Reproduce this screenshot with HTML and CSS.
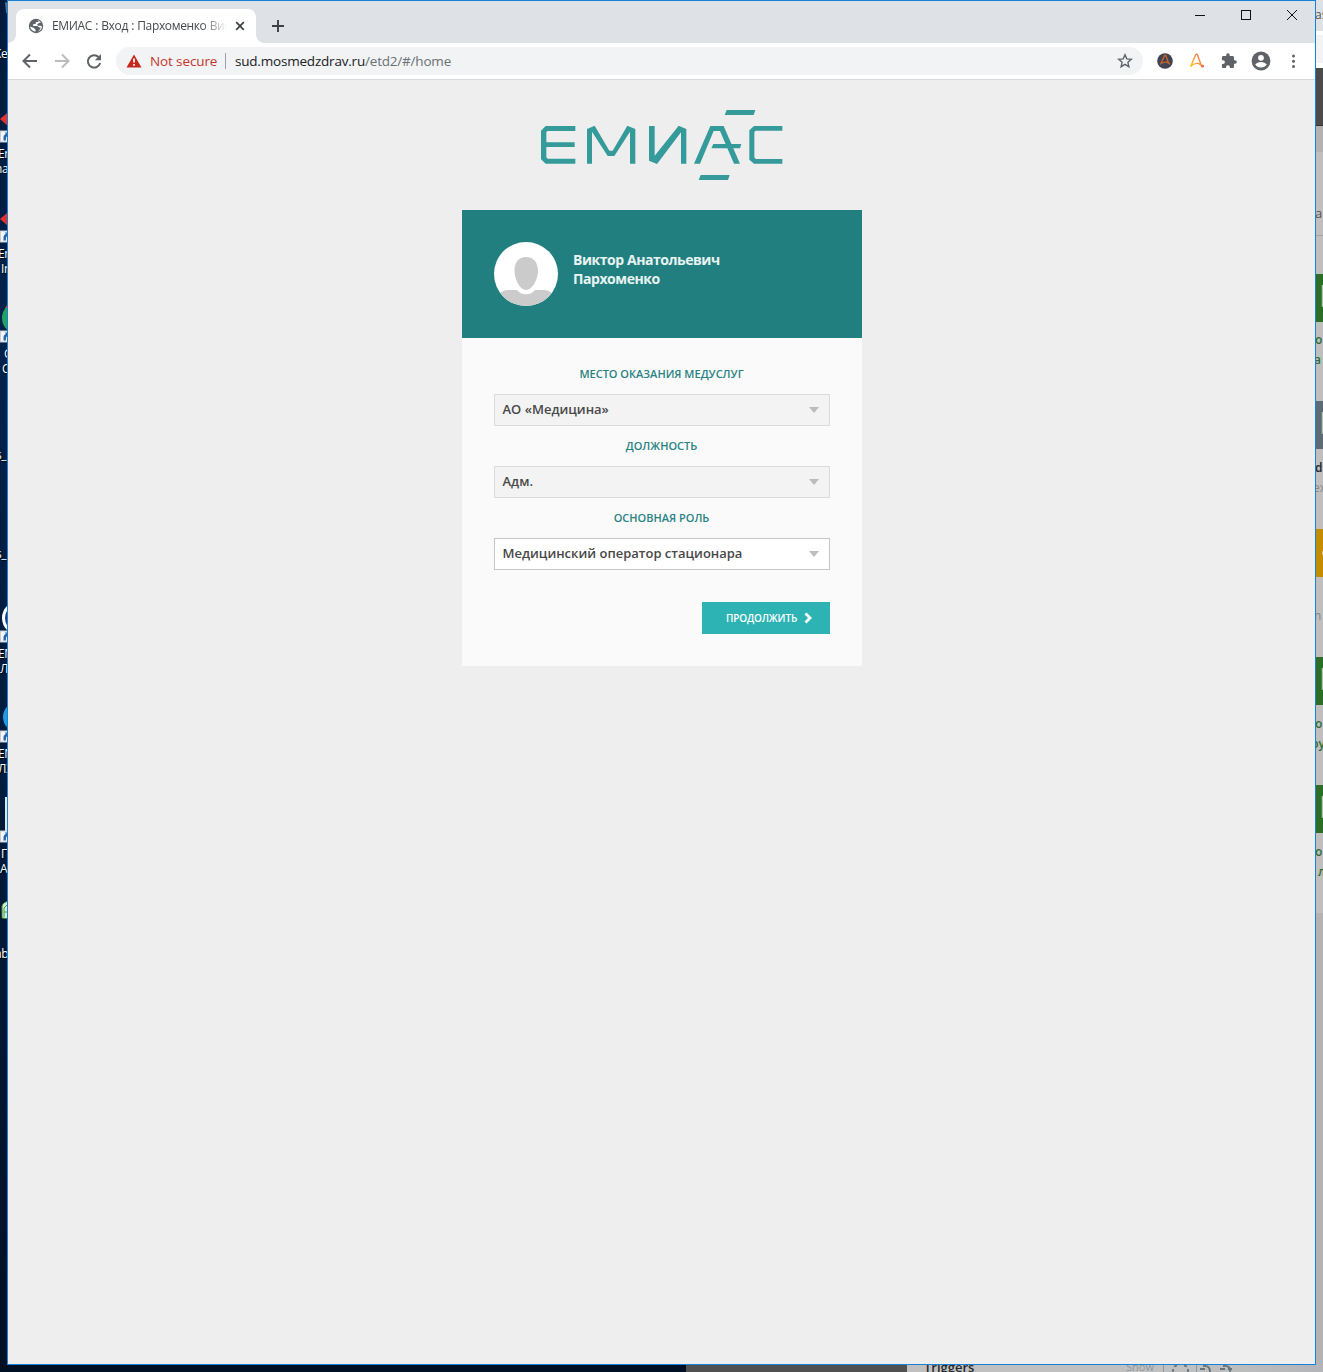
FILE: index.html
```html
<!DOCTYPE html>
<html lang="ru">
<head>
<meta charset="utf-8">
<title>ЕМИАС : Вход</title>
<link rel="stylesheet" href="styles.css">
</head>
<body>
<svg class="defs" width="0" height="0">
  <symbol id="shortcut" viewBox="0 0 12 12"><rect width="12" height="12" fill="#c8ccd2"/><rect x="1" y="1" width="10" height="10" fill="#f4f6f8"/><path d="M3.500 10V7q0-3 2.500-3.500L4.800 2H9v4.500L7.500 5.500Q5.500 6 6 10z" fill="#2d62a8"/></symbol>
  <symbol id="tile" viewBox="0 0 12 22"><path d="M10 .8H1.500V21H10" fill="none" stroke="#b5c4b2" stroke-width="1.500"/></symbol>
</svg>
<div class="desktop">
  <div class="shortcuts">
    <svg class="item" style="top:0;left:0" width="8" height="20"><path d="M5 2l1 10 2 4V3z" fill="#667386"/></svg>
    <span class="item label" style="top:47px;left:-6px">Ke</span>
    <svg class="item" style="top:112px;left:0" width="8" height="14"><path d="M0 7L8 0v14z" fill="#e4312b"/></svg>
    <svg class="item" style="top:130px;left:0" width="12" height="13"><use href="#shortcut"/></svg>
    <span class="item label" style="top:147px;left:-2px">En</span>
    <span class="item label" style="top:162px;left:-5px">na</span>
    <svg class="item" style="top:212px;left:0" width="8" height="14"><path d="M0 7L8 0v14z" fill="#e4312b"/></svg>
    <svg class="item" style="top:230px;left:0" width="12" height="13"><use href="#shortcut"/></svg>
    <span class="item label" style="top:247px;left:-2px">En</span>
    <span class="item label" style="top:262px;left:1px">In</span>
    <svg class="item" style="top:300px;left:0" width="8" height="32"><circle cx="18" cy="18" r="16" fill="#20a35a"/><path d="M5 8l3-4v4z" fill="#d8422f"/></svg>
    <svg class="item" style="top:330px;left:0" width="12" height="13"><use href="#shortcut"/></svg>
    <span class="item label" style="top:347px;left:4px">G</span>
    <span class="item label" style="top:362px;left:2px">C</span>
    <span class="item label" style="top:448px;left:-4px">s_</span>
    <span class="item label" style="top:547px;left:-4px">s_</span>
    <svg class="item" style="top:600px;left:0" width="8" height="36"><circle cx="19" cy="18" r="15.500" fill="#263c78" stroke="#fff" stroke-width="3"/></svg>
    <svg class="item" style="top:630px;left:0" width="12" height="13"><use href="#shortcut"/></svg>
    <span class="item label" style="top:647px;left:-2px">ЕМ</span>
    <span class="item label" style="top:662px;left:0">Л</span>
    <svg class="item" style="top:700px;left:0" width="8" height="34"><circle cx="18" cy="17" r="15" fill="#219ae0"/></svg>
    <svg class="item" style="top:730px;left:0" width="12" height="13"><use href="#shortcut"/></svg>
    <span class="item label" style="top:747px;left:-2px">ЕМ</span>
    <span class="item label" style="top:762px;left:-2px">ЛЭ</span>
    <svg class="item" style="top:797px;left:5px" width="2" height="34"><path d="M0 0h2v34H0z" fill="#e5e5e5"/></svg>
    <svg class="item" style="top:830px;left:0" width="12" height="13"><use href="#shortcut"/></svg>
    <span class="item label" style="top:847px;left:1px">П</span>
    <span class="item label" style="top:862px;left:0">А</span>
    <svg class="item" style="top:900px;left:1px" width="10" height="20"><path d="M1 18V6q1-4 7-5v18z" fill="#d9edd4" stroke="#358324"/><path d="M3 17V8l3-3M3 12h4" fill="none" stroke="#4d9a3d"/></svg>
    <span class="item label" style="top:947px;left:-5px">ab</span>
  </div>

  <div class="monitor">
    <span class="item text" style="top:6px">as</span>
    <div class="item band omni"></div>
    <div class="item band dark"></div>
    <div class="item band sub"></div>
    <span class="item text" style="top:205px;font-size:13px">al</span>
    <div class="item band rule"></div>
    <div class="item band green" style="top:274px"><svg width="12" height="22"><use href="#tile"/></svg></div>
    <span class="item text ok" style="top:331px">о</span>
    <span class="item text ok" style="top:351px;left:-2px">а</span>
    <div class="item band slate" style="top:401px"><svg width="12" height="22"><use href="#tile"/></svg></div>
    <span class="item text strong" style="top:459px">d</span>
    <span class="item text faint" style="top:479px;left:-3px">ex</span>
    <div class="item band amber" style="top:529px"><svg width="12" height="22"><circle cx="4" cy="13" r="3" fill="#ded2b3"/></svg></div>
    <span class="item text faint" style="top:607px;left:-2px">n</span>
    <div class="item band green" style="top:657px"><svg width="12" height="22"><use href="#tile"/></svg></div>
    <span class="item text ok" style="top:715px">о</span>
    <span class="item text ok" style="top:735px;left:-5px">ру</span>
    <div class="item band green" style="top:785px"><svg width="12" height="22"><use href="#tile"/></svg></div>
    <span class="item text ok" style="top:843px">о</span>
    <span class="item text ok" style="top:863px;left:2px">л</span>
    <div class="item band lower"></div>
  </div>

  <div class="bottom-strip">
    <div class="strip-dark"></div>
    <div class="strip-panel">
      <span class="triggers">Triggers</span><span class="show">Show</span>
      <svg class="marks" width="82" height="7" fill="none" stroke="#67747c" stroke-width="1.800"><path d="M.5 0v7M33.500 0v7" stroke="#8d9ba5" stroke-width="1"/><path d="M10 7V4M11 1.500l3-1M21 .5l3 1M25 4v3M37 4h5M40 1q7-1 7 6M57 4h5M60 1q8-1 7 6M69 4h-4"/></svg>
    </div>
  </div>

  <main class="window">
    <header class="tabstrip">
      <div class="tab">
        <svg width="16" height="16" viewBox="0 0 16 16"><circle cx="8" cy="8" r="7.200" fill="#5f6368"/><path d="M2 8.500l4 1.500 1.500 1.500v2.200Q3 13 2 8.500zM7 1.800l4 .2-.8 2H8L7.500 6H5.300L5 8h4.500l1.800 1.500h1.500L11.500 12 9.800 13.500q4-1.500 4.200-5L12 7.500 10.500 8 9 6.500l2-1.500 2-.6Q10.500 1.300 7 1.800z" fill="#fff"/></svg>
        <span class="tab-title">ЕМИАС : Вход : Пархоменко Виктор</span>
        <svg class="tab-x" width="10" height="10" viewBox="0 0 10 10"><path d="M1.200 1.200l7.600 7.600M8.800 1.200L1.200 8.800" stroke="#3c4043" stroke-width="1.700"/></svg>
      </div>
      <svg class="plus" width="12" height="12" viewBox="0 0 12 12"><path d="M6 0v12M0 6h12" stroke="#3c4043" stroke-width="1.900"/></svg>
      <svg class="controls" width="104" height="12" viewBox="0 0 104 12" fill="none" stroke="#111"><path d="M1 6.500h10" shape-rendering="crispEdges"/><rect x="47.500" y="1.500" width="9" height="9" shape-rendering="crispEdges"/><path d="M93 1l10 10M103 1L93 11"/></svg>
    </header>

    <nav class="toolbar">
      <svg class="nav-icons" width="84" height="18" viewBox="0 0 84 18" fill="none" stroke="#5f6368" stroke-width="2"><path d="M16 9H3M9 2.500L2.500 9 9 15.500"/><path d="M34 9h13M41 2.500L47.500 9 41 15.500" stroke="#babcbe"/><path d="M77.500 5A6.200 6.200 0 1 0 79.100 11"/><path d="M80 2v6.200h-6.200z" fill="#5f6368" stroke="none"/></svg>
      <div class="omnibox">
        <svg width="16" height="14" viewBox="0 0 16 14"><path d="M8 .5L15.500 13.500H.5z" fill="#c5281c"/><path d="M8 4.500v4M8 10v1.700" stroke="#fff" stroke-width="1.700"/></svg>
        <span class="insecure">Not secure</span><i></i>
        <span class="url">sud.mosmedzdrav.ru<span>/etd2/#/home</span></span>
        <svg class="star" width="16" height="16" viewBox="0 0 16 16"><path d="M8 1.800l1.800 4.100 4.500.4-3.400 3 1 4.400L8 11.400l-3.900 2.300 1-4.400-3.400-3 4.500-.4z" fill="none" stroke="#5f6368" stroke-width="1.400"/></svg>
      </div>
      <svg class="extensions" width="148" height="20" viewBox="0 0 148 20">
        <defs><linearGradient id="flame" x1="0" y1="1" x2="1" y2="0"><stop offset="0" stop-color="#fdc911"/><stop offset=".5" stop-color="#fa963e"/><stop offset="1" stop-color="#f06543"/></linearGradient></defs>
        <circle cx="10" cy="10" r="7.800" fill="#414252"/>
        <path d="M5.500 13.500L9.500 4.500h1.300l3 8M6 12.500q3-1.800 6-1.400l3 2" fill="none" stroke="#c9652c" stroke-width="1.300"/>
        <path d="M35.500 16L40.500 4q1-1.700 2 0l4 11M36 15q3.500-3.300 8-2.400l4 3" fill="none" stroke="url(#flame)" stroke-width="1.400"/><circle cx="47.500" cy="15" r="1.500" fill="#f06543"/>
        <path transform="translate(65.500 1.500) scale(.71)" d="M20.500 11H19V7c0-1.100-.9-2-2-2h-4V3.500a2.500 2.500 0 0 0-5 0V5H4c-1.100 0-2 .9-2 2v3.800h1.500a2.700 2.700 0 0 1 0 5.400H2V20c0 1.100.9 2 2 2h3.800v-1.500a2.700 2.700 0 0 1 5.400 0V22H17c1.100 0 2-.9 2-2v-4h1.500a2.500 2.500 0 0 0 0-5z" fill="#5f6368"/>
        <circle cx="106" cy="10" r="9.400" fill="#5f6368"/><circle cx="106" cy="6.800" r="2.900" fill="#fff"/><path d="M100.200 13.200q5.800-4.200 11.600 0-2 3.300-5.800 3.300t-5.800-3.300z" fill="#fff"/>
        <g fill="#5f6368"><circle cx="138.500" cy="5" r="1.500"/><circle cx="138.500" cy="10.200" r="1.500"/><circle cx="138.500" cy="15.400" r="1.500"/></g>
      </svg>
    </nav>

    <section class="page">
      <svg class="logo" width="280" height="100" viewBox="0 0 840 300" fill="#359b9a" role="img" aria-label="ЕМИАС">
        <path d="M63 107l14-14h89v15H82l-3 4v30h85v14H79v31l4 4h83v15H77l-14-13z"/>
        <path d="M201 206V102l23-10 44 75h10l44-75 24 10v104h-16v-96l-47 73h-20l-47-73v96z"/>
        <path d="M387 93h17v89l72-90 23 10v104h-16v-94l-72 95-24-10z"/>
        <path d="M522 206l49-113h40l49 113h-18l-42-98h-19l-41 98z"/>
        <path d="M580 147h84l-4 13h-86zM620 45h86l-5 15h-87zM542 240h87l-5 15h-88z"/>
        <path d="M688 106l14-13h85v14h-80l-4 4v76l4 5h80v14h-85l-14-12z"/>
      </svg>
      <div class="card">
        <div class="person">
          <svg width="64" height="64" viewBox="0 0 64 64"><defs><clipPath id="round"><circle cx="32" cy="32" r="32"/></clipPath></defs><g clip-path="url(#round)"><path d="M0 0h64v64H0z" fill="#fff"/><path d="M32 15c7.500 0 12 5.500 12 14S38 48 32 48 20.500 37.500 20.500 29 24.500 15 32 15zM0 64V58q7-10 13-10h10q3 4.200 9 4.200T41 48h10q6 0 13 10v6z" fill="#cbcbcb"/></g></svg>
          <div class="name">Виктор Анатольевич<br>Пархоменко</div>
        </div>
        <form class="form">
          <label>МЕСТО ОКАЗАНИЯ МЕДУСЛУГ</label>
          <div class="select disabled"><span>АО «Медицина»</span><b></b></div>
          <label>ДОЛЖНОСТЬ</label>
          <div class="select disabled"><span>Адм.</span><b></b></div>
          <label>ОСНОВНАЯ РОЛЬ</label>
          <div class="select"><span>Медицинский оператор стационара</span><b></b></div>
          <button type="button"><span>ПРОДОЛЖИТЬ</span><svg width="9" height="12" viewBox="0 0 9 12"><path d="M1.500 1.500L6 6l-4.500 4.500" fill="none" stroke="#fff" stroke-width="2.800"/></svg></button>
        </form>
      </div>
    </section>
  </main>
</div>
</body>
</html>
```
FILE: styles.css
```css
* { box-sizing: border-box; }
body { margin: 0; font-family: "Open Sans", "Noto Sans", sans-serif; }
svg { display: block; flex: none; }
.defs { position: absolute; }
.desktop { position: relative; width: 1323px; height: 1372px; overflow: hidden; background: linear-gradient(#001a3b, #00214a 25%, #001a3a 60%, #001024); }
.item { position: absolute; }
.shortcuts { position: absolute; inset: 0 auto auto 0; width: 7px; height: 1364px; overflow: hidden; }
.label { font: 12px/14px "Open Sans", sans-serif; color: #fff; text-shadow: 1px 1px 1px #000; letter-spacing: -.4px; }

.monitor { position: absolute; left: 1316px; top: 0; width: 7px; height: 1372px; overflow: hidden; background: linear-gradient(#dee1e6 31px, #fff 31px 68px, #bfbfbf 68px); }
.text { left: -1px; font-size: 12px; line-height: 17px; color: #555; }
.ok { color: #2e6b34; font-weight: 600; }
.strong { color: #222; font-weight: 600; }
.faint { color: #858585; }
.band { left: 0; width: 7px; height: 48px; overflow: hidden; }
.band svg { margin: 11px 0 0 5px; }
.omni { top: 35px; height: 28px; background: #f1f3f4; }
.dark { top: 68px; height: 58px; background: #4b4b4b; border-bottom: 1px solid #333; }
.sub { top: 126px; height: 26px; background: #b2b2b2; }
.rule { top: 235px; height: 1px; background: #a2a4a5; }
.green { background: #2c6d28; }
.slate { background: #5c6b75; }
.amber { background: #c28e00; }
.lower { top: 913px; height: 459px; background: #b3b3b3; }

.bottom-strip { position: absolute; left: 686px; top: 1365px; width: 637px; height: 7px; display: flex; overflow: hidden; }
.strip-dark { width: 221px; background: #505050; }
.strip-panel { flex: 1; display: flex; align-items: flex-start; background: linear-gradient(90deg, #c0c0c0 70%, #b4b5b8); padding-left: 17px; }
.triggers { width: 202px; margin-top: -6px; font-size: 13px; line-height: 17px; font-weight: 600; color: #26282b; }
.show { width: 37px; margin-top: -7px; font-size: 11px; line-height: 17px; color: #91999e; }

.window { position: absolute; left: 7px; top: 0; width: 1309px; height: 1365px; border: 1px solid #1681d8; background: #eee; display: flex; flex-direction: column; }
.tabstrip { height: 42px; flex: none; background: #dee1e6; display: flex; align-items: flex-start; padding: 8px 17px 0 8px; }
.tab { position: relative; width: 240px; height: 34px; background: #fff; border-radius: 8px 8px 0 0; display: flex; align-items: center; padding: 0 11px 0 12px; }
.tab::before, .tab::after { content: ""; position: absolute; bottom: 0; width: 8px; height: 8px; }
.tab::before { left: -8px; background: radial-gradient(circle at 0 0, #dee1e6 7.500px, #fff 8px); }
.tab::after { right: -8px; background: radial-gradient(circle at 100% 0, #dee1e6 7.500px, #fff 8px); }
.tab-title { width: 175px; margin-left: 8px; overflow: hidden; white-space: nowrap; font-size: 12px; line-height: 16px; letter-spacing: -.36px; word-spacing: .5px; color: #45494d; -webkit-mask-image: linear-gradient(90deg, #000 150px, transparent 175px); mask-image: linear-gradient(90deg, #000 150px, transparent 175px); }
.tab-x { margin-left: auto; }
.plus { margin: 11px 0 0 16px; }
.controls { margin-left: auto; }
.toolbar { height: 37px; flex: none; display: flex; align-items: center; background: #fff; border-bottom: 1px solid #d8d9db; padding-left: 13px; }
.nav-icons { margin-right: 11px; }
.omnibox { width: 1027px; height: 28px; border-radius: 14px; background: #f1f3f4; display: flex; align-items: center; padding: 0 10px; font-size: 13.500px; line-height: 20px; white-space: nowrap; }
.insecure { width: 67px; margin-left: 8px; color: #c5362c; letter-spacing: -.12px; }
.omnibox i { width: 1px; height: 16px; background: #9aa0a6; margin: 0 9px 0 8px; }
.url { color: #202124; letter-spacing: -.2px; }
.url span { color: #6b7075; }
.star { margin-left: auto; }
.extensions { margin-left: 12px; }

.page { flex: 1; display: flex; flex-direction: column; align-items: center; padding: 15px 0 0 1px; }
.logo { margin-left: -4px; }
.card { width: 400px; height: 456px; margin-top: 15px; background: #fafafa; }
.person { height: 128px; background: #21807f; padding: 32px; display: flex; }
.name { margin: 8px 0 0 15px; font-size: 14px; line-height: 19px; font-weight: 700; letter-spacing: -.45px; color: #e9f3f3; white-space: nowrap; }
.form { padding: 16px 32px 0; display: flex; flex-direction: column; }
.form label { height: 40px; padding-right: 1px; text-align: center; font-size: 11px; line-height: 40px; font-weight: 600; color: #278382; }
.select { height: 32px; border: 1px solid #c6c6c6; background: #fff; display: flex; align-items: center; justify-content: space-between; padding: 0 10px 0 7.500px; font-size: 13px; font-weight: 600; line-height: 20px; color: #484848; }
.select span { padding-bottom: 2px; }
.select.disabled { background: #f3f3f3; border-color: #dadada; }
.select b { border: 5px solid transparent; border-top: 6px solid #bcbcbc; border-bottom: 0; }
button { align-self: flex-end; width: 128px; height: 32px; margin-top: 32px; border: 0; background: #2db3b4; color: #fff; display: flex; align-items: center; padding: 0 0 0 24px; font: 600 10px/16px "Open Sans", sans-serif; letter-spacing: -.15px; }
button span { width: 71px; margin-right: 7px; padding-bottom: 1px; text-align: left; }
```
